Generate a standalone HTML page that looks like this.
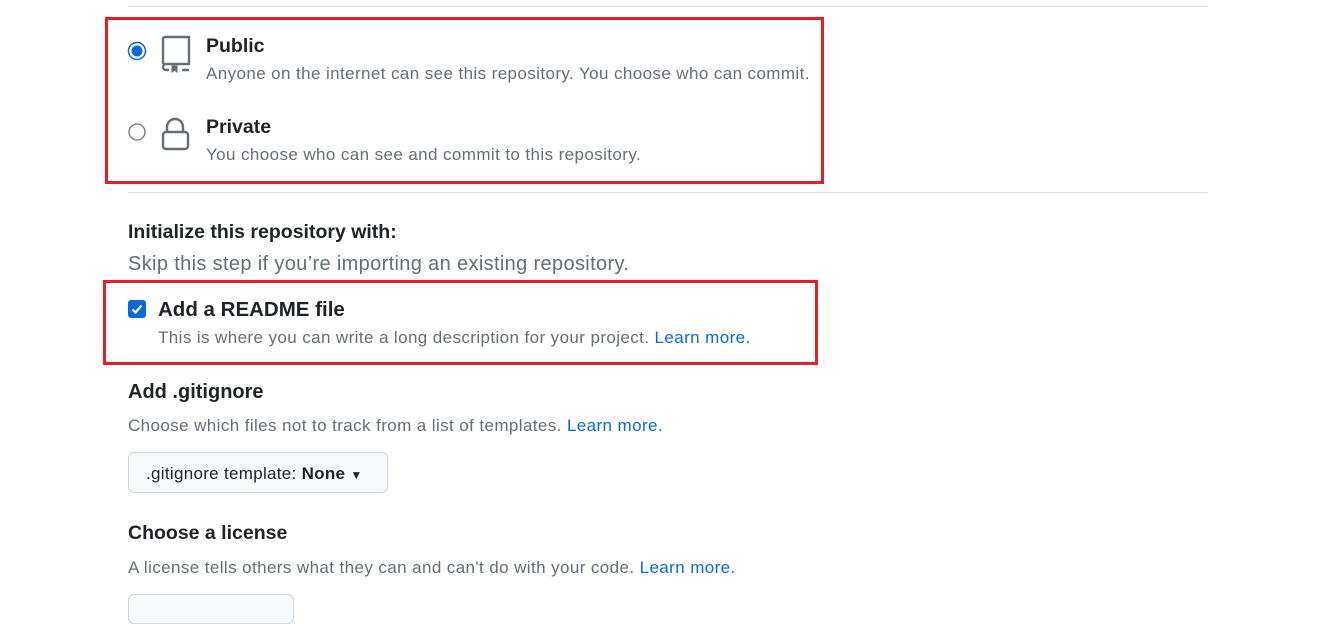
<!DOCTYPE html>
<html><head><meta charset="utf-8"><style>
body{margin:0;width:1327px;height:605px;background:#fff;position:relative;overflow:hidden;font-family:"Liberation Sans",sans-serif;color:#1f2328}
.a{position:absolute;white-space:nowrap}
.hr{position:absolute;left:128px;width:1080px;height:1px;background:#d8dee4}
.red{position:absolute;border:3px solid #e3202a;box-sizing:border-box}
.t{font-size:19.5px;font-weight:bold;color:#1f2328}
.d{font-size:17px;letter-spacing:0.4px;color:#656d76}
.l{color:#0969da}
.h{font-size:19.5px;font-weight:bold}
.s{font-size:20px;letter-spacing:0.35px;color:#656d76}
</style></head><body>
<div class="hr" style="top:6px"></div>
<div class="hr" style="top:192px"></div>
<div class="red" style="left:105px;top:17px;width:719px;height:167px"></div>
<div class="red" style="left:103px;top:280px;width:715px;height:85px"></div>

<svg class="a" style="left:127px;top:41px" width="20" height="20"><circle cx="10" cy="10" r="8.5" fill="#fff" stroke="#0969da" stroke-width="1.5"/><circle cx="10" cy="10" r="5.5" fill="#0969da"/></svg>
<svg class="a" style="left:160px;top:35px" width="32" height="38" viewBox="0 0 32 38" fill="none" stroke="#656d76" stroke-width="2.4"><path d="M3 29V4a2 2 0 0 1 2-2h24v27H6a3 3 0 0 0-3 3a3 3 0 0 0 3 3h3M22 35h7"/><path d="M12 31v6l2.5-2 2.5 2v-6z" fill="#656d76" stroke-width="1"/></svg>
<div class="a t" style="left:206px;top:35px">Public</div>
<div class="a d" style="left:206px;top:64px">Anyone on the internet can see this repository. You choose who can commit.</div>

<svg class="a" style="left:127px;top:122px" width="20" height="20"><circle cx="10" cy="10" r="8" fill="#fff" stroke="#6e7781" stroke-width="1.3"/></svg>
<svg class="a" style="left:161px;top:117px" width="30" height="34" viewBox="0 0 30 34" fill="none" stroke="#656d76" stroke-width="2.4"><path d="M6 15V10a8 8 0 0 1 16 0v5"/><rect x="2" y="15" width="25" height="17" rx="3"/></svg>
<div class="a t" style="left:206px;top:116px">Private</div>
<div class="a d" style="left:206px;top:145px">You choose who can see and commit to this repository.</div>

<div class="a h" style="left:128px;top:221px;font-size:19.5px">Initialize this repository with:</div>
<div class="a s" style="left:128px;top:253px">Skip this step if you’re importing an existing repository.</div>

<svg class="a" style="left:128px;top:300px" width="18" height="18"><rect width="18" height="18" rx="3" fill="#0969da"/><path d="M4.5 9.5l3 3 6-7" stroke="#fff" stroke-width="2.2" fill="none"/></svg>
<div class="a t" style="left:158px;top:298px;font-size:20.5px">Add a README file</div>
<div class="a d" style="left:158px;top:328px">This is where you can write a long description for your project. <span class="l">Learn more.</span></div>

<div class="a t" style="left:128px;top:381px;font-size:20px">Add .gitignore</div>
<div class="a d" style="left:128px;top:416px">Choose which files not to track from a list of templates. <span class="l">Learn more.</span></div>
<div class="a" style="left:128px;top:452px;width:260px;height:41px;border:1px solid #d0d7de;border-radius:6px;background:#f6f8fa;box-sizing:border-box"></div>
<div class="a" style="left:146px;top:464px;font-size:17px;letter-spacing:0.3px">.gitignore template: <b>None</b> <span style="font-size:12px">▼</span></div>

<div class="a t" style="left:128px;top:522px">Choose a license</div>
<div class="a d" style="left:128px;top:558px">A license tells others what they can and can't do with your code. <span class="l">Learn more.</span></div>
<div class="a" style="left:128px;top:594px;width:166px;height:30px;border:1px solid #d0d7de;border-radius:6px;background:#f6f8fa;box-sizing:border-box"></div>
</body></html>
